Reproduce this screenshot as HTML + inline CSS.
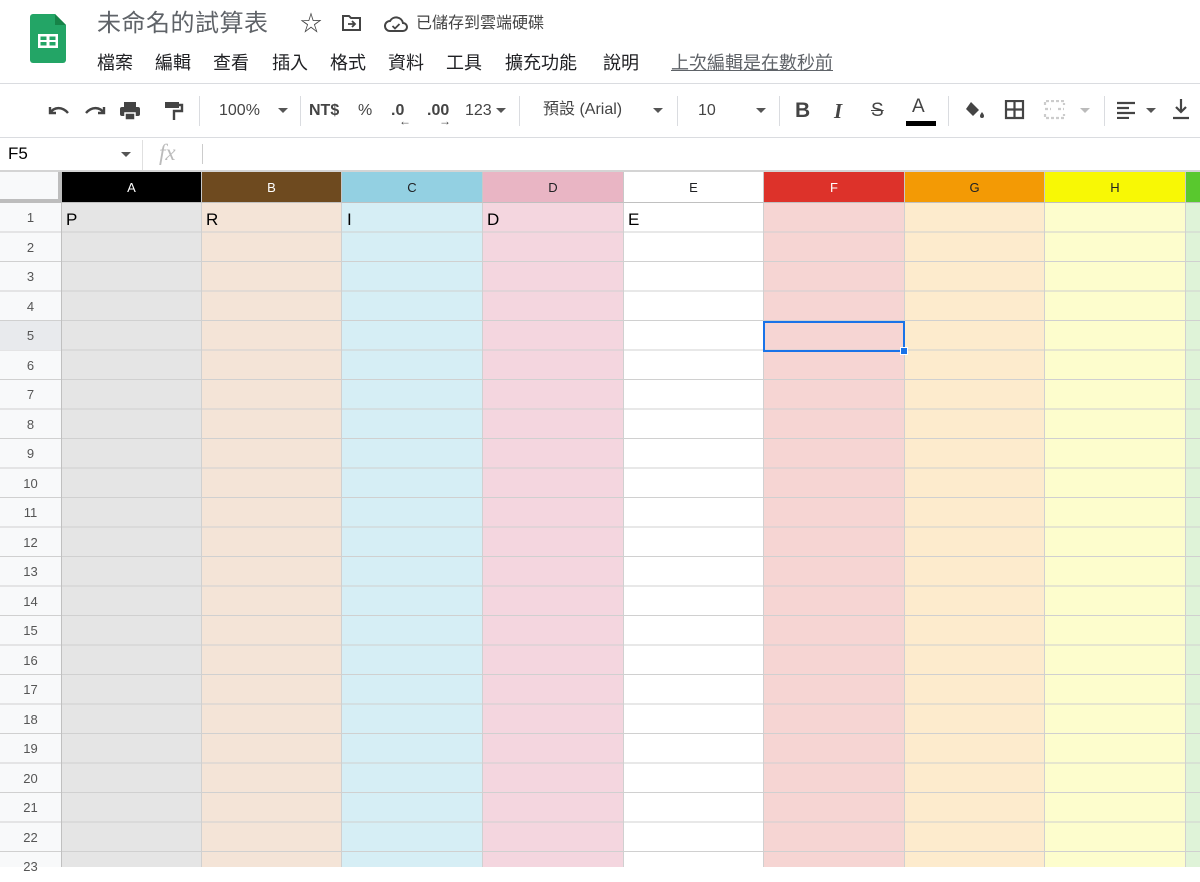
<!DOCTYPE html>
<html><head><meta charset="utf-8"><style>
*{margin:0;padding:0;box-sizing:border-box}
body{width:1200px;height:867px;overflow:hidden;background:#fff;font-family:"Liberation Sans","Noto Sans CJK TC",sans-serif;position:relative;color:#202124}
.a{position:absolute}
.m{position:absolute;top:51px;font-size:18px;line-height:24px;color:#202124;white-space:nowrap}
.tb{color:#444;font-size:16px;line-height:20px}
.col{position:absolute;top:203px;height:664px;border-right:1px solid #d0d0d0;background-image:repeating-linear-gradient(to bottom,transparent 0,transparent 28.5px,#d0d0d0 28.5px,#d0d0d0 29.5px)}
.hd{position:absolute;top:172px;height:31px;font-size:13px;text-align:center;line-height:31px;border-right:1px solid #c8c8c8;border-bottom:1px solid #c0c0c0}
.rn{position:absolute;left:0;width:61px;text-align:center;font-size:13px;color:#555;height:29.5px;line-height:29.5px}
.ct{position:absolute;top:203px;height:29px;line-height:33px;font-size:17px;color:#000}
</style></head><body>
<svg class="a" style="left:30px;top:14px" width="36" height="50" viewBox="0 0 36 50"><path d="M3 0H25L36 11V46a3 3 0 0 1-3 3H3a3 3 0 0 1-3-3V3a3 3 0 0 1 3-3z" fill="#23a566"/><path d="M25 0V11H36z" fill="#168348"/><rect x="8" y="20" width="20" height="14" fill="#fff"/><rect x="10.5" y="22.5" width="6" height="3.5" fill="#23a566"/><rect x="19.5" y="22.5" width="6" height="3.5" fill="#23a566"/><rect x="10.5" y="28" width="6" height="3.5" fill="#23a566"/><rect x="19.5" y="28" width="6" height="3.5" fill="#23a566"/></svg>
<div class="a" style="left:97px;top:9px;font-size:24px;line-height:30px;color:#5f6368;letter-spacing:0.5px">未命名的試算表</div>
<div class="a" style="left:300px;top:9px;font-size:22px;line-height:30px;color:#444">☆</div>
<svg class="a" style="left:341px;top:14px" width="22" height="18" viewBox="0 0 22 18"><path d="M2 2h6l2 2h9v12H2z" fill="none" stroke="#444" stroke-width="2"/><path d="M7 10h7M11 7l3 3-3 3" fill="none" stroke="#444" stroke-width="1.8"/></svg>
<svg class="a" style="left:384px;top:15px" width="24" height="18" viewBox="0 0 24 18"><path d="M6 16a5 5 0 0 1 0-10 7 7 0 0 1 13 2 4 4 0 0 1 0 8z" fill="none" stroke="#444" stroke-width="2"/><path d="M8.5 11l2.5 2.5 4.5-4.5" fill="none" stroke="#444" stroke-width="1.8"/></svg>
<div class="a" style="left:416px;top:13px;font-size:16px;line-height:22px;color:#444">已儲存到雲端硬碟</div>
<div class="m" style="left:97px">檔案</div><div class="m" style="left:155px">編輯</div><div class="m" style="left:213px">查看</div><div class="m" style="left:272px">插入</div><div class="m" style="left:330px">格式</div><div class="m" style="left:388px">資料</div><div class="m" style="left:446px">工具</div><div class="m" style="left:505px">擴充功能</div><div class="m" style="left:603px">說明</div><div class="m" style="left:671px;color:#5f6368;text-decoration:underline">上次編輯是在數秒前</div>
<div class="a" style="left:0;top:83px;width:1200px;height:1px;background:#dadce0"></div>
<svg class="a" style="left:46px;top:100px" width="160" height="22" viewBox="0 0 160 22"><g fill="none" stroke="#444" stroke-width="2.4"><path d="M4 7v6h6M4 13c4-6 12-7 18 0"/><path d="M58 7v6h-6M58 13c-4-6-12-7-18 0"/></g><rect x="78" y="2" width="12" height="5" fill="#444"/><rect x="74" y="7" width="20" height="9" rx="2" fill="#444"/><rect x="79" y="13" width="10" height="7" fill="#444" stroke="#fff" stroke-width="1.5"/><rect x="119" y="2" width="14" height="6" fill="#444"/><path d="M133 5h3v6h-8v9" fill="none" stroke="#444" stroke-width="2.4"/></svg>
<div class="a" style="left:199px;top:96px;width:1px;height:30px;background:#dadce0"></div>
<div class="a tb" style="left:219px;top:101px">100%</div><div class="a" style="left:278px;top:108px;border:5px solid transparent;border-top-color:#555"></div>
<div class="a" style="left:300px;top:96px;width:1px;height:30px;background:#dadce0"></div>
<div class="a tb" style="left:309px;top:101px;font-weight:bold">NT$</div>
<div class="a tb" style="left:358px;top:101px">%</div>
<div class="a tb" style="left:391px;top:101px;font-weight:bold">.0</div><div class="a" style="left:399px;top:114px;font-size:12px;color:#444;font-weight:bold">←</div>
<div class="a tb" style="left:427px;top:101px;font-weight:bold">.00</div><div class="a" style="left:439px;top:114px;font-size:12px;color:#444;font-weight:bold">→</div>
<div class="a tb" style="left:465px;top:101px">123</div><div class="a" style="left:496px;top:108px;border:5px solid transparent;border-top-color:#555"></div>
<div class="a" style="left:519px;top:96px;width:1px;height:30px;background:#dadce0"></div>
<div class="a tb" style="left:543px;top:100px">預設 (Arial)</div><div class="a" style="left:653px;top:108px;border:5px solid transparent;border-top-color:#555"></div>
<div class="a" style="left:677px;top:96px;width:1px;height:30px;background:#dadce0"></div>
<div class="a tb" style="left:698px;top:101px">10</div><div class="a" style="left:756px;top:108px;border:5px solid transparent;border-top-color:#555"></div>
<div class="a" style="left:779px;top:96px;width:1px;height:30px;background:#dadce0"></div>
<div class="a" style="left:795px;top:99px;font-size:21px;line-height:24px;font-weight:bold;color:#444">B</div>
<div class="a" style="left:834px;top:99px;font-size:21px;line-height:24px;font-style:italic;color:#444;font-family:'Liberation Serif',serif;font-weight:bold">I</div>
<div class="a" style="left:871px;top:99px;font-size:19px;line-height:24px;color:#444;text-decoration:line-through">S</div>
<div class="a" style="left:912px;top:96px;font-size:19px;line-height:22px;color:#444">A</div><div class="a" style="left:906px;top:121px;width:30px;height:5px;background:#000"></div>
<div class="a" style="left:948px;top:96px;width:1px;height:30px;background:#dadce0"></div>
<svg class="a" style="left:962px;top:100px" width="24" height="20" viewBox="0 0 24 20"><path d="M9 2l8 8-6 6-7-7z" fill="#444"/><path d="M20 12c1.5 2 2 3 2 4a2 2 0 0 1-4 0c0-1 .5-2 2-4z" fill="#444"/></svg>
<svg class="a" style="left:1004px;top:100px" width="22" height="20" viewBox="0 0 22 20"><path d="M2 1h17v17H2zM10.5 1v17M2 9.5h17" fill="none" stroke="#444" stroke-width="2.2"/></svg>
<svg class="a" style="left:1043px;top:100px" width="24" height="20" viewBox="0 0 24 20"><path d="M2 5V1h19v4M2 14v4h19v-4M2 9h6M15 9h6" fill="none" stroke="#ccc" stroke-width="2.2" stroke-dasharray="3 2"/></svg>
<div class="a" style="left:1080px;top:108px;border:5px solid transparent;border-top-color:#bbb"></div>
<div class="a" style="left:1104px;top:96px;width:1px;height:30px;background:#dadce0"></div>
<svg class="a" style="left:1117px;top:101px" width="20" height="18" viewBox="0 0 20 18"><path d="M0 2h18M0 7h12M0 12h18M0 17h12" stroke="#444" stroke-width="2.2"/></svg>
<div class="a" style="left:1146px;top:108px;border:5px solid transparent;border-top-color:#555"></div>
<svg class="a" style="left:1172px;top:98px" width="20" height="22" viewBox="0 0 20 22"><path d="M9 1v13M4 9l5 5 5-5M1 20h16" fill="none" stroke="#444" stroke-width="2.2"/></svg>
<div class="a" style="left:0;top:137px;width:1200px;height:1px;background:#dadce0"></div>
<div class="a" style="left:8px;top:144px;font-size:17px;line-height:20px;color:#000">F5</div>
<div class="a" style="left:121px;top:152px;border:5px solid transparent;border-top-color:#555"></div>
<div class="a" style="left:142px;top:140px;width:1px;height:30px;background:#e0e0e0"></div>
<div class="a" style="left:159px;top:139px;font-size:23px;line-height:28px;color:#bbb;font-style:italic;font-family:'Liberation Serif',serif">fx</div>
<div class="a" style="left:202px;top:144px;width:1px;height:20px;background:#ccc"></div>
<div class="a" style="left:0;top:170px;width:1200px;height:2px;background:#d4d4d4"></div>
<div class="a" style="left:0;top:172px;width:62px;height:31px;background:#f8f9fa;border-right:4px solid #bdbdbd;border-bottom:4px solid #bdbdbd"></div>
<div class="col" style="left:0;width:62px;background-color:#f8f9fa;border-right:1px solid #c0c0c0"></div>
<div class="a" style="left:0;top:321px;width:61px;height:29px;background:#e8eaed"></div>
<div class="col" style="left:62px;width:140px;background-color:#e5e5e5"></div>
<div class="col" style="left:202px;width:140px;background-color:#f4e4d7"></div>
<div class="col" style="left:342px;width:141px;background-color:#d6eef5"></div>
<div class="col" style="left:483px;width:141px;background-color:#f4d6df"></div>
<div class="col" style="left:624px;width:140px;background-color:#fff"></div>
<div class="col" style="left:764px;width:141px;background-color:#f6d5d3"></div>
<div class="col" style="left:905px;width:140px;background-color:#fdebcd"></div>
<div class="col" style="left:1045px;width:141px;background-color:#fdfdcd"></div>
<div class="col" style="left:1186px;width:20px;background-color:#dff3d8"></div>
<div class="hd" style="left:62px;width:140px;background:#000;color:#fff">A</div>
<div class="hd" style="left:202px;width:140px;background:#6e4a1f;color:#fff">B</div>
<div class="hd" style="left:342px;width:141px;background:#93d0e2">C</div>
<div class="hd" style="left:483px;width:141px;background:#e9b5c4">D</div>
<div class="hd" style="left:624px;width:140px;background:#fff">E</div>
<div class="hd" style="left:764px;width:141px;background:#dd322a;color:#fff">F</div>
<div class="hd" style="left:905px;width:140px;background:#f39a05">G</div>
<div class="hd" style="left:1045px;width:141px;background:#f8f805">H</div>
<div class="hd" style="left:1186px;width:20px;background:#59c82e"></div>
<div class="ct" style="left:66px">P</div><div class="ct" style="left:206px">R</div><div class="ct" style="left:347px">I</div><div class="ct" style="left:487px">D</div><div class="ct" style="left:628px">E</div>
<div class="a" style="left:763px;top:321px;width:142px;height:31px;border:2px solid #1a73e8"></div>
<div class="a" style="left:900px;top:347px;width:8px;height:8px;background:#1a73e8;border:1px solid #fff"></div>
<div class="rn" style="top:203px">1</div><div class="rn" style="top:232.5px">2</div><div class="rn" style="top:262px">3</div><div class="rn" style="top:291.5px">4</div><div class="rn" style="top:321px">5</div><div class="rn" style="top:350.5px">6</div><div class="rn" style="top:380px">7</div><div class="rn" style="top:409.5px">8</div><div class="rn" style="top:439px">9</div><div class="rn" style="top:468.5px">10</div><div class="rn" style="top:498px">11</div><div class="rn" style="top:527.5px">12</div><div class="rn" style="top:557px">13</div><div class="rn" style="top:586.5px">14</div><div class="rn" style="top:616px">15</div><div class="rn" style="top:645.5px">16</div><div class="rn" style="top:675px">17</div><div class="rn" style="top:704.5px">18</div><div class="rn" style="top:734px">19</div><div class="rn" style="top:763.5px">20</div><div class="rn" style="top:793px">21</div><div class="rn" style="top:822.5px">22</div><div class="rn" style="top:852px">23</div>
</body></html>
